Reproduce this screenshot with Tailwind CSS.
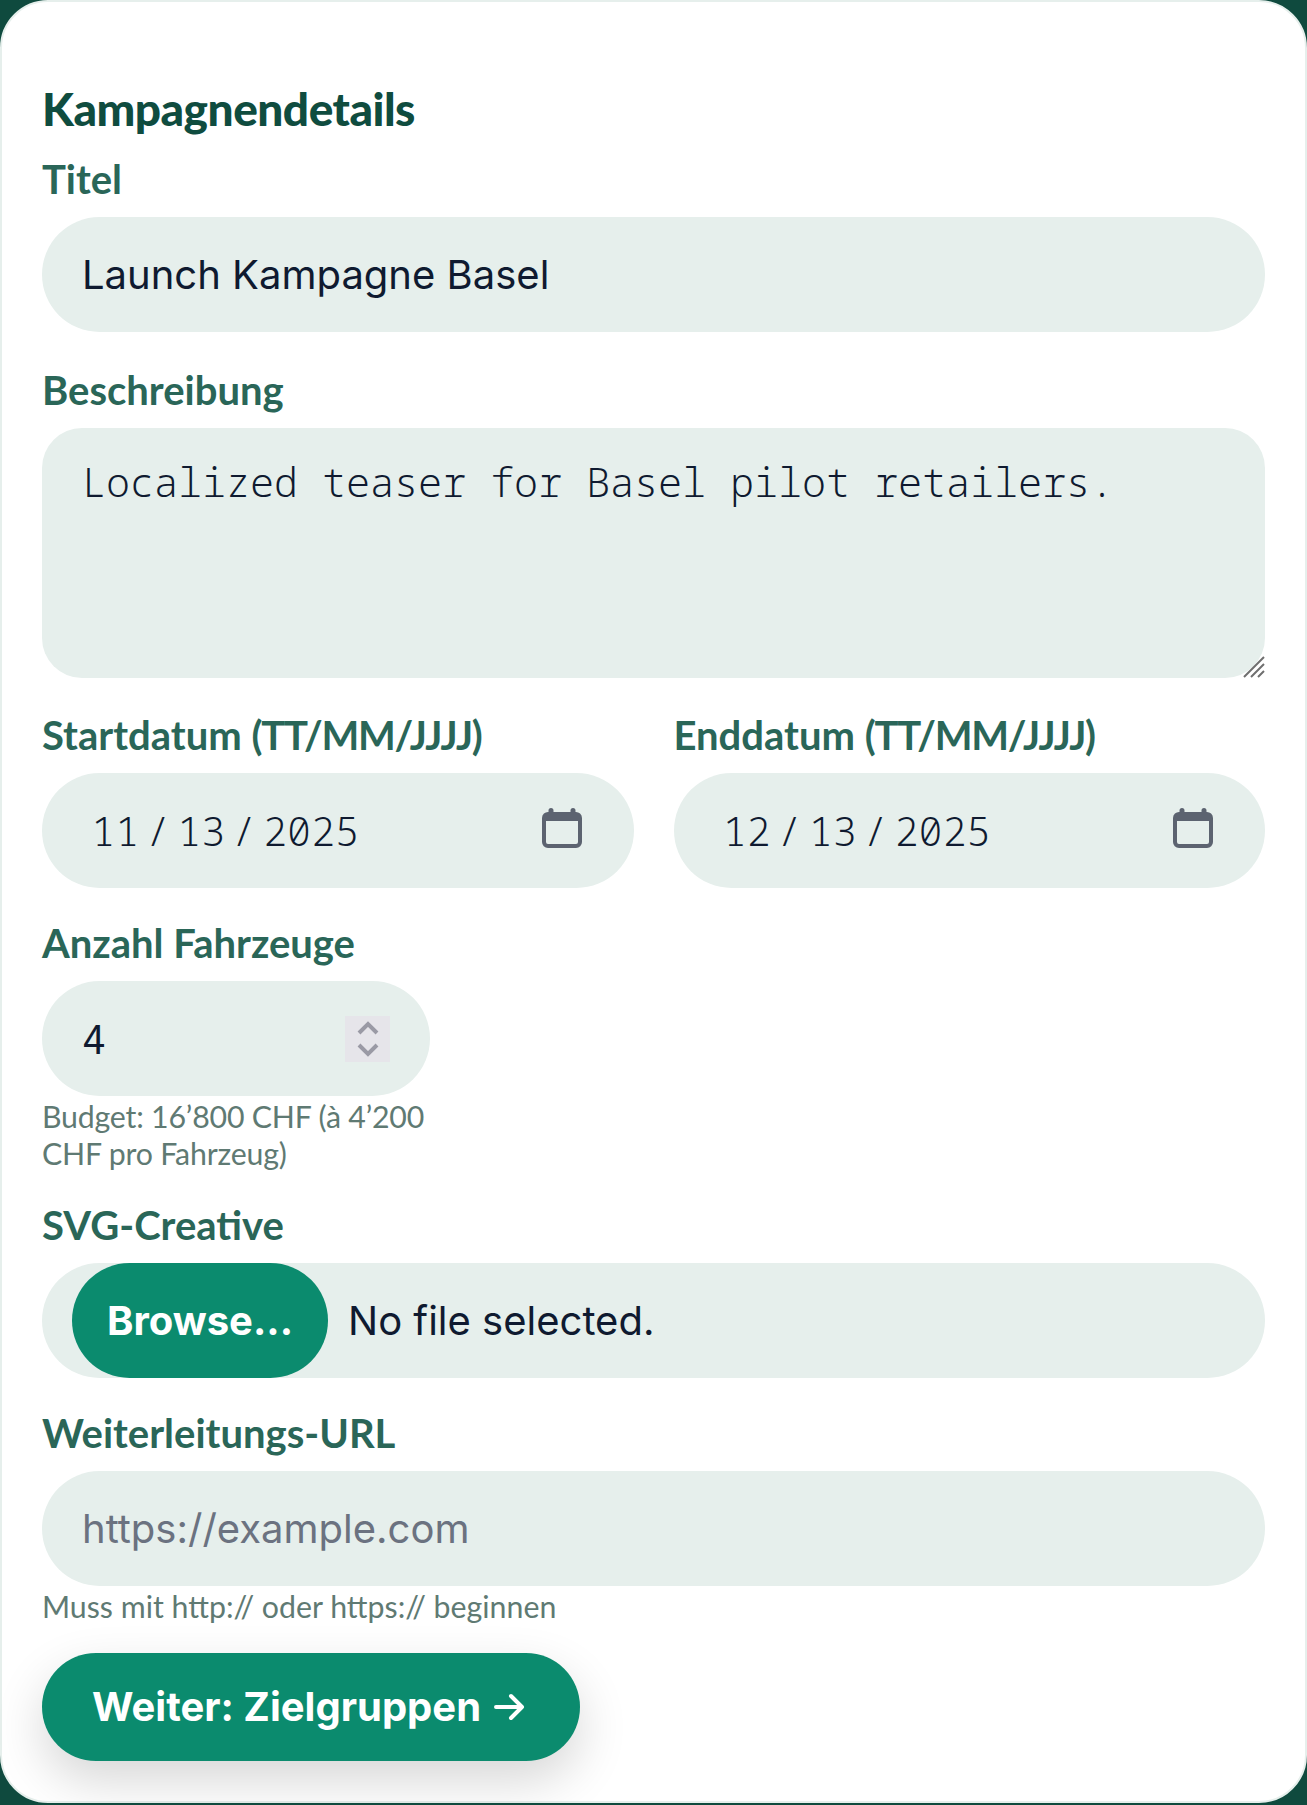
<!DOCTYPE html>
<html lang="de">
<head>
    <meta charset="UTF-8">
    <title>Kampagnendetails</title>
    <script src="https://cdn.jsdelivr.net/npm/@tailwindcss/browser@4"></script>
</head>
<body class="bg-[#0f4a3e] font-['Lato',sans-serif]">
    <div class="h-[1803px] bg-white border-2 border-[#e6efec] rounded-[48px] px-10 pt-[83px]">
        <h2 class="text-[46px] leading-[48px] font-black tracking-[-0.5px] text-[#0f4c3f]">Kampagnendetails</h2>

        <div class="mt-[22px]">
            <label class="block text-[40px] leading-[48px] font-bold text-[#2a6658] mb-[14px]">Titel</label>
            <div class="h-[115px] rounded-full bg-[#e6efec] px-10 flex items-center text-[40px] font-['Inter',sans-serif] text-[#0f1a30]">Launch Kampagne Basel</div>
        </div>

        <div class="mt-[34px]">
            <label class="block text-[40px] leading-[48px] font-bold text-[#2a6658] mb-[14px]">Beschreibung</label>
            <div class="relative h-[250px] rounded-[40px] bg-[#e6efec] px-10 py-[30px] text-[40px] leading-[48px] font-[350] font-['Noto_Sans_Mono','Liberation_Mono',monospace] text-[#0f1a30]">Localized teaser for Basel pilot retailers.
                <svg class="absolute right-0 bottom-0" width="22" height="22" viewBox="0 0 22 22" stroke="#6f6f6f" stroke-width="2" fill="none"><path d="M1 21 21 1M8 21 21 8M15 21 21 15"/></svg>
            </div>
        </div>

        <div class="mt-[33px] grid grid-cols-2 gap-10">
            <div>
                <label class="block text-[40px] leading-[48px] font-bold text-[#2a6658] mb-[14px]">Startdatum <span class="tracking-[-1.250px]">(TT/MM/JJJJ)</span></label>
                <div class="h-[115px] rounded-full bg-[#e6efec] pl-[49px] pr-[52px] flex items-center justify-between text-[40px] font-[350] font-['Noto_Sans_Mono','Liberation_Mono',monospace] text-[#0f1a30]">
                    <span>11<span class="mx-[7px]">/</span>13<span class="mx-[7px]">/</span>2025</span>
                    <svg class="mb-[6px]" width="40" height="40" viewBox="0 0 40 40" fill="#5c6370"><path d="M9 0a2.500 2.500 0 0 1 2.500 2.500V4h17V2.500a2.500 2.500 0 0 1 5 0V4A6 6 0 0 1 40 10v24a6 6 0 0 1-6 6H6a6 6 0 0 1-6-6V10a6 6 0 0 1 6.500-6V2.500A2.500 2.500 0 0 1 9 0Zm-5 13v21a2 2 0 0 0 2 2h28a2 2 0 0 0 2-2V13Z"/></svg>
                </div>
            </div>
            <div>
                <label class="block text-[40px] leading-[48px] font-bold text-[#2a6658] mb-[14px]">Enddatum <span class="tracking-[-1.250px]">(TT/MM/JJJJ)</span></label>
                <div class="h-[115px] rounded-full bg-[#e6efec] pl-[49px] pr-[52px] flex items-center justify-between text-[40px] font-[350] font-['Noto_Sans_Mono','Liberation_Mono',monospace] text-[#0f1a30]">
                    <span>12<span class="mx-[7px]">/</span>13<span class="mx-[7px]">/</span>2025</span>
                    <svg class="mb-[6px]" width="40" height="40" viewBox="0 0 40 40" fill="#5c6370"><path d="M9 0a2.500 2.500 0 0 1 2.500 2.500V4h17V2.500a2.500 2.500 0 0 1 5 0V4A6 6 0 0 1 40 10v24a6 6 0 0 1-6 6H6a6 6 0 0 1-6-6V10a6 6 0 0 1 6.500-6V2.500A2.500 2.500 0 0 1 9 0Zm-5 13v21a2 2 0 0 0 2 2h28a2 2 0 0 0 2-2V13Z"/></svg>
                </div>
            </div>
        </div>

        <div class="mt-[31px] w-[388px]">
            <label class="block text-[40px] leading-[48px] font-bold text-[#2a6658] mb-[14px]">Anzahl Fahrzeuge</label>
            <div class="h-[115px] rounded-full bg-[#e6efec] pl-10 pr-[40px] flex items-center justify-between text-[40px] font-['Noto_Sans_Mono','Liberation_Mono',monospace] text-[#0f1a30]">
                <span>4</span>
                <div class="w-[45px] h-[46px] bg-[#e6e5ea] flex items-center justify-center">
                    <svg width="22" height="36" viewBox="0 0 22 36" fill="none" stroke="#9a9aa5" stroke-width="4"><path d="M2 12 11 3l9 9M2 24l9 9 9-9"/></svg>
                </div>
            </div>
            <p class="mt-[2px] text-[30.300px] leading-[37px] tracking-[-0.2px] text-[#5f7a73]">Budget: 16’800 CHF (à 4’200 CHF pro Fahrzeug)</p>
        </div>

        <div class="mt-[29px]">
            <label class="block text-[40px] leading-[48px] font-bold text-[#2a6658] mb-[14px]">SVG-Creative</label>
            <div class="h-[115px] rounded-full bg-[#e6efec] pl-[30px] flex items-center font-['Inter',sans-serif] text-[40px] text-[#0f1a30]">
                <button class="h-[115px] w-[256px] rounded-full bg-[#0b8b6e] text-white font-bold">Browse...</button>
                <span class="ml-[20px]">No file selected.</span>
            </div>
        </div>

        <div class="mt-[31px]">
            <label class="block text-[40px] leading-[48px] font-bold text-[#2a6658] mb-[14px]">Weiterleitungs-URL</label>
            <div class="h-[115px] rounded-full bg-[#e6efec] px-10 flex items-center text-[40px] font-['Inter',sans-serif] text-[#6b7280]">https://example.com</div>
            <p class="mt-[2px] text-[30.300px] leading-[37px] text-[#5f7a73]">Muss mit http:// oder https:// beginnen</p>
        </div>

        <button class="mt-[28px] h-[108px] w-[538px] pr-[5px] rounded-full bg-[#0b8b6e] text-white text-[40px] font-bold font-['Inter',sans-serif] shadow-[0_20px_50px_rgba(0,0,0,0.16)] flex items-center justify-center gap-3">
            Weiter: Zielgruppen
            <svg width="32" height="32" viewBox="0 0 32 32" fill="none" stroke="white" stroke-width="4" stroke-linecap="round" stroke-linejoin="round"><path d="M3 16h26M18 5l11 11-11 11"/></svg>
        </button>
    </div>
</body>
</html>
